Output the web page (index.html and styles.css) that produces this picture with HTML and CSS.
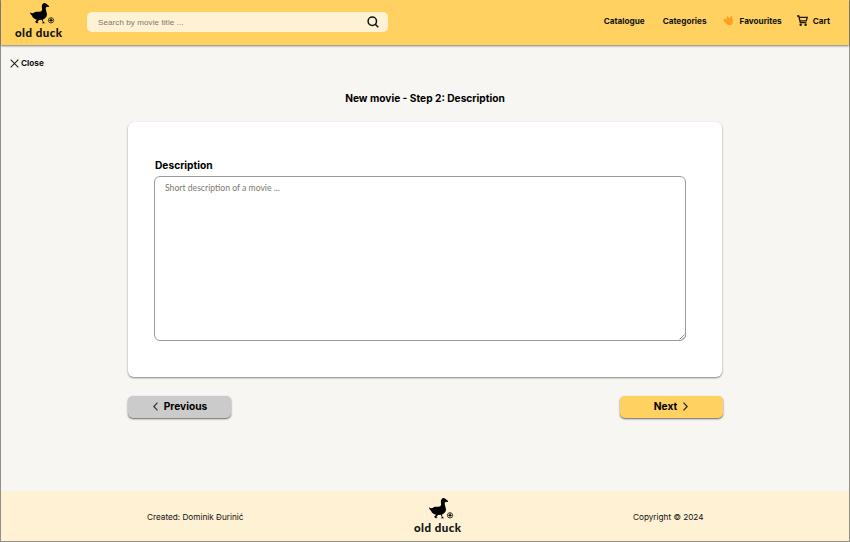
FILE: index.html
```html
<!DOCTYPE html>
<html lang="en">
<head>
<meta charset="utf-8">
<title>Old Duck</title>
<link rel="stylesheet" href="styles.css">
</head>
<body>
<svg class="defs" aria-hidden="true">
  <symbol id="duck" viewBox="55 6 81 66">
    <path d="M115 18 L108 12 Q98 5 94 16 C92 22 97 29 92 34 C87 37 77 33 72 37 C67 41 63 41 58 37 C59 43 62 45 64 47 C66 53 72 57 79 59 L73 66 L79 70 L84 69 L80 66 L85 60 L93 59 L97 67 L93 70 L104 70 L99 66 L96 59 C106 54 111 48 108 39 C107 31 102 25 108 20 L115 21 Z"/>
    <g fill="none" stroke="#4d4226" stroke-width="3"><circle cx="121" cy="61" r="8"/><path d="M121 54v14M114 61h14"/></g>
    <circle cx="121" cy="61" r="3"/>
  </symbol>
</svg>
<div class="page">
  <header class="header">
    <a class="logo"><svg class="duck"><use href="#duck"/></svg><span>old duck</span></a>
    <label class="search">
      <input type="text" placeholder="Search by movie title ...">
      <svg width="12" height="12" viewBox="0 0 12 12" fill="none" stroke="#111" stroke-width="1.500"><circle cx="5.300" cy="5.200" r="4.200"/><path d="M8.300 8.300l3 3"/></svg>
    </label>
    <nav class="nav">
      <a class="catalogue">Catalogue</a>
      <a class="categories">Categories</a>
      <a class="favourites"><svg width="11" height="11" viewBox="0 0 11 11" fill="#ff9d1c"><path d="M.4 4.200Q.6 3.500 1.400 3.800L3.600 4.600 3.500 1.800Q3.900.7 4.800 1.700L6.300 3.500 8 1.300Q8.900.5 9 1.800L9.100 4 9.900 3.800 9.700 7.500Q9.200 10.400 6.200 10.200 3.800 10 2.500 7.800L1.200 7Q.5 6.300 1.500 6.100Z"/></svg>Favourites</a>
      <a class="cart"><svg width="11" height="11" viewBox="0 0 11 11" fill="none" stroke="#1b170d" stroke-width="1.300"><path d="M0 1h1.800l1.500 6.700h6.100M2.200 2.400h8l-.9 3.500H3"/><circle cx="3.700" cy="9.700" r=".6"/><circle cx="8.600" cy="9.700" r=".6"/></svg>Cart</a>
    </nav>
  </header>
  <main class="main">
    <a class="close"><svg width="9" height="9" viewBox="0 0 9 9" fill="none" stroke="#222" stroke-width="1.100"><path d="M.7.7l7.600 7.600M8.300.7L.7 8.300"/></svg>Close</a>
    <h1>New movie - Step 2: Description</h1>
    <section class="card">
      <label class="label" for="description">Description</label>
      <div class="field">
        <textarea id="description" placeholder="Short description of a movie ..."></textarea>
        <svg class="grip" width="6" height="6" viewBox="0 0 6 6" stroke="#888" stroke-width=".9"><path d="M.5 5.500l5-5M3 5.500L5.500 3"/></svg>
      </div>
    </section>
    <div class="actions">
      <button class="previous"><svg width="5" height="9" viewBox="0 0 5 9" fill="none" stroke="#333" stroke-width="1.200"><path d="M4.500.6L.8 4.500l3.700 3.900"/></svg>Previous</button>
      <button class="next">Next<svg width="5" height="9" viewBox="0 0 5 9" fill="none" stroke="#222" stroke-width="1.200"><path d="M.5.6l3.700 3.900L.5 8.400"/></svg></button>
    </div>
  </main>
  <footer class="footer">
    <span class="created">Created: Dominik Đurinić</span>
    <a class="logo"><svg class="duck"><use href="#duck"/></svg><span>old duck</span></a>
    <span class="copyright">Copyright © 2024</span>
  </footer>
</div>
</body>
</html>
```
FILE: styles.css
```css
* { box-sizing: border-box; }
body { margin: 0; font-family: Inter, sans-serif; color: #111; }
svg { flex: none; display: block; }
.defs { display: none; }
.page {
  height: 542px;
  display: flex;
  flex-direction: column;
  background: #f8f6f2;
  border: 1px solid #929187;
  border-top: 0;
}
.header {
  height: 45px;
  display: flex;
  background: #ffd160;
  box-shadow: 0 1px 2px rgba(0, 0, 0, .5);
}
.logo {
  width: 50px;
  display: flex;
  flex-direction: column;
  font: 900 11.500px/12px Lato, sans-serif;
  letter-spacing: .45px;
  white-space: nowrap;
}
.logo .duck { width: 27px; height: 22px; margin-left: 14px; }
.logo span { margin-top: 3px; }
.header .logo { margin: 2px 0 0 14px; }
.search {
  width: 301px;
  height: 20px;
  margin: 12px 0 0 22px;
  padding: 0 9px 0 11px;
  display: flex;
  align-items: center;
  background: #fff1d4;
  border-radius: 5px;
}
.search input {
  flex: 1;
  min-width: 0;
  padding: 0;
  border: 0;
  outline: 0;
  background: none;
  font: 8px "Liberation Sans", sans-serif;
  letter-spacing: .1px;
}
.search input::placeholder, textarea::placeholder { color: #7d7970; opacity: 1; }
.nav {
  flex: 1;
  height: 41px;
  display: flex;
  align-items: center;
  justify-content: flex-end;
  padding-right: 19px;
  font-size: 8.200px;
  font-weight: 700;
}
.nav a { display: flex; align-items: center; white-space: nowrap; }
.categories { margin-left: 18px; }
.favourites { margin-left: 16px; gap: 6px; }
.cart { margin-left: 15px; gap: 5px; }
.main { flex: 1; display: flex; flex-direction: column; }
.close {
  display: flex;
  align-items: center;
  gap: 2px;
  height: 12px;
  margin: 12px 0 0 9px;
  font-size: 8.200px;
  font-weight: 700;
}
h1 {
  margin: 22px 0 0;
  text-align: center;
  font-size: 10.200px;
  line-height: 14px;
  font-weight: 700;
  color: #000;
}
.card {
  width: 594px;
  height: 255px;
  margin: 17px 0 0 127px;
  padding: 36px 36px 0 26px;
  background: #fff;
  border-radius: 6px;
  box-shadow: 0 1px 2px rgba(0, 0, 0, .48);
}
.label { display: block; padding-left: 1px; font-size: 10.200px; line-height: 14px; font-weight: 700; color: #000; }
.field { position: relative; height: 165px; margin-top: 4px; }
textarea {
  display: block;
  width: 100%;
  height: 100%;
  padding: 5px 10px;
  border: 1px solid #9b9b9b;
  border-radius: 6px;
  resize: none;
  outline: 0;
  background: #fff;
  font: 8.650px/12px Lato, sans-serif;
}
.grip { position: absolute; right: 1px; bottom: 1px; }
.actions {
  width: 595px;
  margin: 19px 0 0 127px;
  display: flex;
  justify-content: space-between;
}
button {
  width: 103px;
  height: 22px;
  padding: 0 0 2px 1px;
  display: flex;
  align-items: center;
  justify-content: center;
  gap: 6px;
  border: 0;
  border-radius: 5px;
  color: #000;
  font: 700 10.200px/14px Inter, sans-serif;
  box-shadow: 0 1px 2px rgba(0, 0, 0, .6);
}
.previous { background: #cbcbcb; }
.next { padding-right: 2px; background: #ffd160; }
.footer {
  height: 50px;
  display: flex;
  background: #fff1d4;
  font-size: 8.200px;
  line-height: 12px;
}
.created { width: 267px; margin: 20px 0 0 146px; white-space: nowrap; }
.footer .logo { margin-top: 6px; }
.copyright { margin: 20px 0 0 169px; white-space: nowrap; }
```
